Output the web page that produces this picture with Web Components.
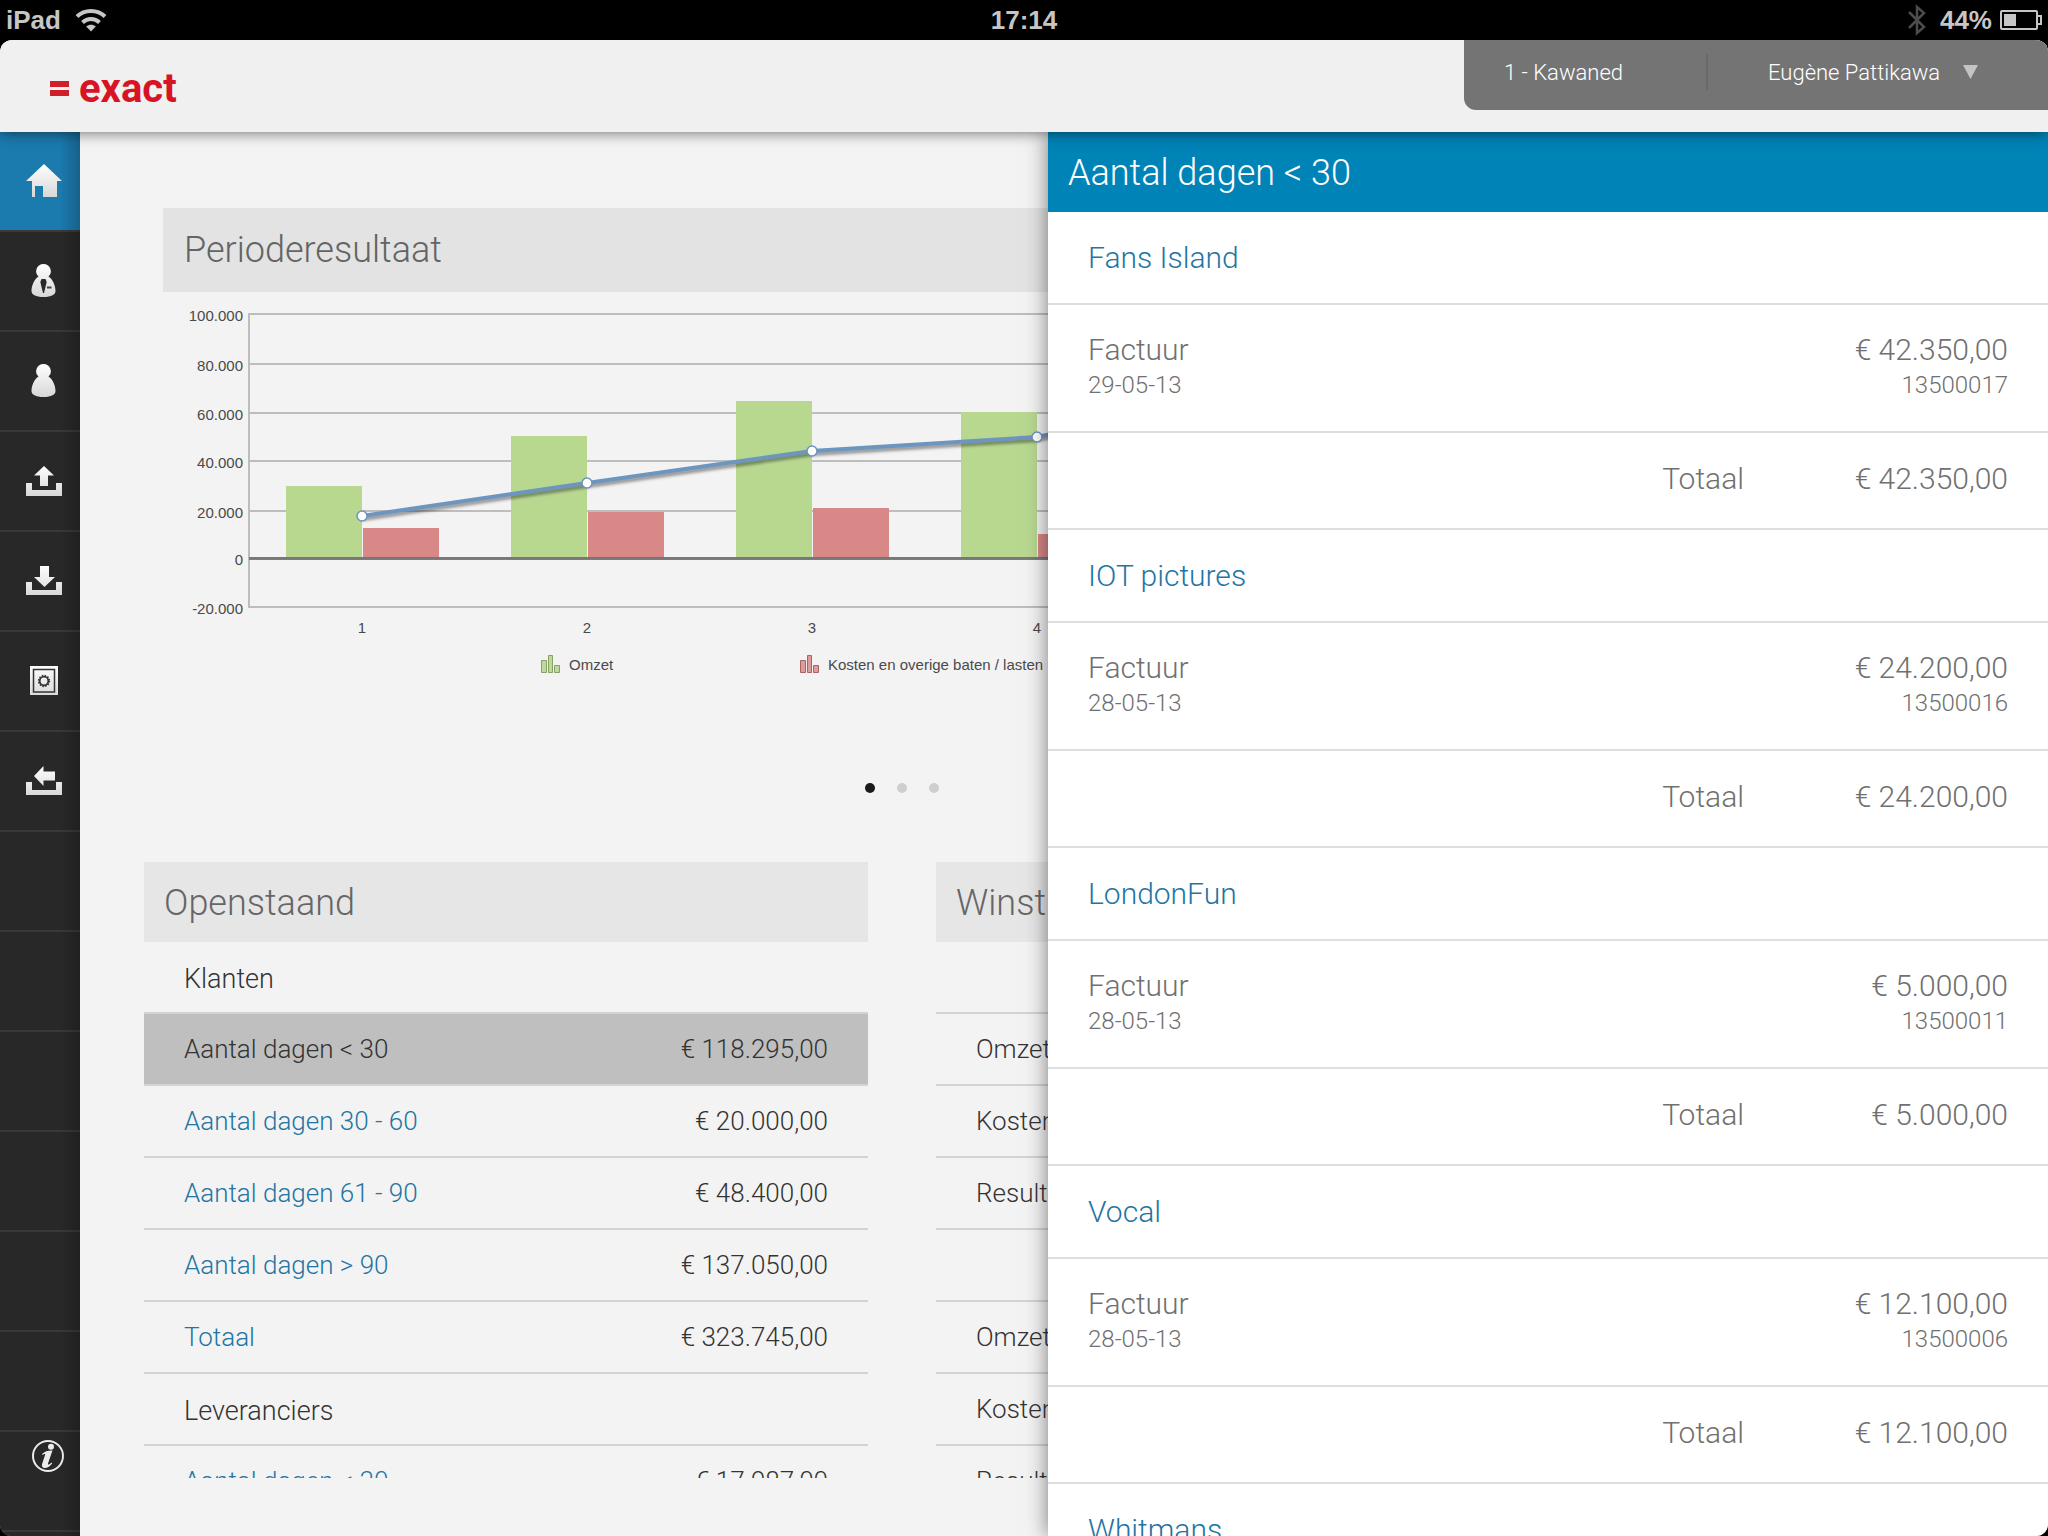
<!DOCTYPE html>
<html lang="nl">
<head>
<meta charset="utf-8">
<title>Exact - Cockpit</title>
<style>
  html, body { margin: 0; height: 100%; background: #000; }
  body { font-family: Roboto, "Liberation Sans", sans-serif; font-weight: 300; overflow: hidden; }
</style>
</head>
<body>
<exact-app>
  <status-bar slot="status" device="iPad" time="17:14" battery="44%"></status-bar>
  <app-header slot="header" company="1 - Kawaned" user="Eugène Pattikawa"></app-header>
  <side-nav slot="nav"></side-nav>
  <result-chart heading="Perioderesultaat"></result-chart>
  <page-dots count="3"></page-dots>
  <summary-row>
    <summary-table heading="Openstaand" rows="openstaand"></summary-table>
    <summary-table heading="Winst" rows="winst"></summary-table>
  </summary-row>
  <detail-drawer slot="drawer" heading="Aantal dagen &lt; 30">
    <invoice-group name="Fans Island" date="29-05-13" number="13500017" amount="€ 42.350,00"></invoice-group>
    <invoice-group name="IOT pictures" date="28-05-13" number="13500016" amount="€ 24.200,00"></invoice-group>
    <invoice-group name="LondonFun" date="28-05-13" number="13500011" amount="€ 5.000,00"></invoice-group>
    <invoice-group name="Vocal" date="28-05-13" number="13500006" amount="€ 12.100,00"></invoice-group>
    <invoice-group name="Whitmans"></invoice-group>
  </detail-drawer>
</exact-app>

<script>
const esc = s => (s || '').replace(/&/g, '&amp;').replace(/</g, '&lt;').replace(/>/g, '&gt;');

function define(name, render) {
  customElements.define(name, class extends HTMLElement {
    constructor() { super(); this.attachShadow({ mode: 'open' }); }
    connectedCallback() { this.shadowRoot.innerHTML = render(this); }
  });
}

/* Application frame: status bar, header, navigation, content and overlay drawer */
define('exact-app', () => `
  <style>
    :host { display: flex; flex-direction: column; height: 100vh; }
    .frame { flex: 1; min-height: 0; display: flex; flex-direction: column; overflow: hidden;
      border-radius: 12px; background: #f3f3f3; }
    .body { flex: 1; min-height: 0; display: flex; position: relative; }
    main { flex: 1; min-width: 0; display: flex; flex-direction: column; box-sizing: border-box;
      padding: 76px 388px 58px 64px; overflow: hidden; }
  </style>
  <slot name="status"></slot>
  <div class="frame">
    <slot name="header"></slot>
    <div class="body">
      <slot name="nav"></slot>
      <main><slot></slot></main>
      <slot name="drawer"></slot>
    </div>
  </div>`);

define('status-bar', el => `
  <style>
    :host { display: grid; grid-template-columns: 1fr auto 1fr; align-items: center; height: 40px;
      padding: 0 6px; background: #000; color: #c6c6c6; font: bold 26px/40px "Liberation Sans", sans-serif; }
    .side { display: flex; align-items: center; gap: 14px; }
    .end { justify-content: flex-end; gap: 8px; }
    .end span { margin-left: 6px; }
    svg { display: block; }
  </style>
  <div class="side"><span>${esc(el.getAttribute('device'))}</span>
    <svg width="32" height="24" viewBox="0 0 32 24" fill="none" stroke="#c6c6c6" stroke-width="4">
      <path d="M2 8.500C9.500 1 22.500 1 30 8.500"/><path d="M7.500 14.500c5-4.800 12-4.800 17 0"/>
      <path d="M16 23.500l-4.800-5c2.600-2.200 7-2.200 9.600 0z" fill="#c6c6c6" stroke="none"/></svg>
  </div>
  <span>${esc(el.getAttribute('time'))}</span>
  <div class="side end">
    <svg width="18" height="32" viewBox="0 0 18 32" fill="none" stroke="#4c4c4c" stroke-width="2.500">
      <path d="M1 8l15 15-7 6V3l7 6L1 24"/></svg>
    <span>${esc(el.getAttribute('battery'))}</span>
    <svg width="42" height="20" viewBox="0 0 42 20"><rect x="1" y="1" width="36" height="18" rx="1" fill="none" stroke="#c6c6c6" stroke-width="2"/>
      <rect x="4" y="4" width="12" height="12" fill="#c6c6c6"/><path d="M37 6h4v8h-4" fill="none" stroke="#c6c6c6" stroke-width="2"/></svg>
  </div>`);

define('app-header', el => `
  <style>
    :host { display: flex; justify-content: space-between; align-items: flex-start; height: 92px;
      position: relative; z-index: 3; background: #f0f0f0; box-shadow: 0 0 14px rgba(0,0,0,.6); }
    .logo { display: flex; align-items: center; gap: 10px; box-sizing: border-box; height: 92px; padding: 6px 0 0 50px;
      color: #d81324; font-weight: 700; font-size: 40px; line-height: 40px; text-decoration: none; }
    .account { display: flex; align-items: center; box-sizing: border-box; width: 584px; height: 70px;
      padding: 0 70px 6px 40px; background: #747474; border-bottom-left-radius: 12px; }
    button { display: flex; align-items: center; justify-content: space-between; border: 0; padding: 0;
      background: none; color: #fff; font: inherit; font-size: 22px; }
    .company { width: 202px; }
    .user { flex: 1; padding-left: 60px; }
    i { width: 2px; height: 36px; background: #6a6a6a; }
  </style>
  <a class="logo" href="#"><svg width="19" height="16"><path d="M0 0h19v6H0zM0 9h19v6H0z" fill="#cf1f2b"/></svg>exact</a>
  <div class="account">
    <button class="company">${esc(el.getAttribute('company'))}</button><i></i>
    <button class="user">${esc(el.getAttribute('user'))}
      <svg width="15" height="14"><path d="M0 0h15L7.500 14z" fill="#c4c4c4"/></svg></button>
  </div>`);

const body = 'M12 0a7.300 7.300 0 0 1 5 12.600C21.500 15.500 24 22 24 27c0 3.500-4 6-12 6S0 30.500 0 27c0-5 2.500-11.500 7-14.400A7.300 7.300 0 0 1 12 0z';
const icons = {
  Home: '<path d="M18 0l18 17h-5v16H17V22H9v11H6V17H0z"/>',
  Relaties: `<g transform="translate(5.500 0)"><path d="${body}"/><path d="M10 15h4l1.200 3-2.700 11h-1L8.800 18z" fill="#282828"/><path d="M15.500 22.500h4.500v2h-4.500z" fill="#444"/></g>`,
  Contacten: `<g transform="translate(5.500 0)"><path d="${body}"/></g>`,
  Verkoop: '<path d="M18 2l10 9.500h-6V22h-8V11.500H8zM0 19h6v7h24v-7h6v13H0z"/>',
  Inkoop: '<path d="M14 2h9v11h6L18.500 23 8 13h6zM0 18h6v8h24v-8h6v13H0z"/>',
  Kluis: '<path d="M4 2h28v29H4z"/><path d="M7.500 5.500h21v22.500h-21z" fill="none" stroke="#333" stroke-width="1.500"/><circle cx="18" cy="17" r="4.300" fill="none" stroke="#333" stroke-width="1.800"/><circle cx="18" cy="17" r="5.400" fill="none" stroke="#333" stroke-width="1.600" stroke-dasharray="1.400 1.430"/>',
  Terug: '<path d="M8 12L17.500 2v5.500H29v9H17.500V22zM0 18h6v8h24v-8h6v13H0z"/>'
};

define('nav-item', el => {
  const name = el.getAttribute('icon');
  const info = name === 'Info';
  return `
  <style>
    :host { display: block; box-sizing: border-box; height: 100px; border-bottom: 2px solid #393939; background: #282828; flex: none; }
    :host([active]) { background: #1b7aae; }
    a { display: flex; justify-content: center; box-sizing: border-box; height: 98px; padding: 32px 0 0 8px; }
    :host([icon="Info"]) a { padding: 8px 0 0 16px; }
    svg { display: block; }
  </style>
  ${!name ? '' : `<a href="#" aria-label="${name}">${info ? `
    <svg width="32" height="32" viewBox="0 0 32 32"><circle cx="16" cy="16" r="15" fill="none" stroke="#ebebeb" stroke-width="2"/>
      <circle cx="19" cy="6.800" r="3" fill="#ebebeb"/>
      <path d="M10 14c3-2.800 6-3.700 10.500-3.500l-4.500 13c-.5 1.500.8 1.800 3.300-1l1 .7C17 28 13.500 28.500 11.500 27.800c-2-.7-1.800-2.500-1.200-4.500l3-9c-1-.5-2 .1-2.800.8z" fill="#ebebeb"/></svg>` : `
    <svg width="36" height="34" viewBox="0 0 36 34" fill="url(#g)"><defs><linearGradient id="g" x1="0" y1="0" x2="0" y2="34" gradientUnits="userSpaceOnUse">
      <stop stop-color="#fff"/><stop offset="1" stop-color="#d6d6d6"/></linearGradient></defs>${icons[name]}</svg>`}</a>`}`;
});

define('side-nav', () => `
  <style>
    :host { display: block; width: 80px; flex: none; background: #282828; overflow: hidden; position: relative; }
    nav { display: flex; flex-direction: column; }
    .shade { position: absolute; inset: 0; pointer-events: none; background: linear-gradient(to left, rgba(0,0,0,.2), transparent 20px); }
  </style>
  <nav>
    <nav-item icon="Home" active></nav-item>
    ${Object.keys(icons).slice(1).map(n => `<nav-item icon="${n}"></nav-item>`).join('')}
    ${'<nav-item></nav-item>'.repeat(6)}
    <nav-item icon="Info"></nav-item>
    <nav-item></nav-item>
  </nav>
  <div class="shade"></div>`);

define('result-chart', el => {
  const grid = [[22, '100.000'], [72, '80.000'], [121, '60.000'], [169, '40.000'], [219, '20.000'], [266, '0'], [315, '-20.000']];
  const months = [[194, 236, 224], [144, 220, 191], [109, 216, 159], [120, 242, 145], [96, 230, 98], [110, 225, 90]];
  const cx = i => 199 + 225 * i;
  const legend = (x, fill, stroke, text) => `
    <g transform="translate(${x} 363)" fill="${fill}" stroke="${stroke}"><path d="M.5 5.500h5v12h-5z"/><path d="M7.500.5h4v17h-4z"/><path d="M13.500 10.500h5v7h-5z"/></g>
    <text x="${x + 28}" y="378">${text}</text>`;
  return `
  <style>
    :host { display: block; margin: 0 19px; }
    h2 { margin: 0; padding-left: 21px; background: #e3e3e3; color: #646464; font-weight: 300; font-size: 36px; line-height: 84px; }
    svg { display: block; width: 100%; height: 420px; overflow: visible; }
    text { font: 15px "Liberation Sans", sans-serif; fill: #4a4a4a; }
  </style>
  <h2>${esc(el.getAttribute('heading'))}</h2>
  <svg>
    <defs><filter id="soft" x="-5%" y="-20%" width="110%" height="150%"><feGaussianBlur stdDeviation="1.500"/></filter></defs>
    <g stroke="#bdbdbd" stroke-width="2">${grid.map(g => `<path d="M86 ${g[0]}H1436"/>`).join('')}<path d="M86 21V316"/></g>
    ${months.map((m, i) => `<rect x="${cx(i) - 76}" y="${m[0]}" width="76" height="${266 - m[0]}" fill="#b8d890"/>
      <rect x="${cx(i) + 1}" y="${m[1]}" width="76" height="${266 - m[1]}" fill="#d98888"/>`).join('')}
    <path d="M86 266.500H1436" stroke="#707070" stroke-opacity=".9" stroke-width="3"/>
    <g fill="none">
      <path d="M${months.map((m, i) => `${cx(i)} ${m[2] + 3}`).join('L')}" stroke="#000" stroke-opacity=".4" stroke-width="4" filter="url(#soft)"/>
      <path d="M${months.map((m, i) => `${cx(i)} ${m[2]}`).join('L')}" stroke="#6c95bf" stroke-width="4"/>
    </g>
    ${months.map((m, i) => `<circle cx="${cx(i)}" cy="${m[2]}" r="5" fill="#fff" stroke="#6c95bf" stroke-width="1.500"/>`).join('')}
    <g text-anchor="end">${grid.map(g => `<text x="80" y="${g[0] + 7}">${g[1]}</text>`).join('')}</g>
    <g text-anchor="middle">${months.map((m, i) => `<text x="${cx(i)}" y="341">${i + 1}</text>`).join('')}</g>
    ${legend(378, '#bfd99d', '#86a066', 'Omzet')}
    ${legend(637, '#dc9c9c', '#a86464', 'Kosten en overige baten / lasten')}
  </svg>`;
});

define('page-dots', el => `
  <style>
    :host { display: flex; justify-content: center; gap: 22px; padding: 71px 0 69px; }
    button { width: 10px; height: 10px; padding: 0; border: 0; border-radius: 50%; background: #cfcfcf; }
    button:first-of-type { background: #1a1a1a; }
  </style>
  ${Array.from({ length: +el.getAttribute('count') }, (_, i) => `<button aria-label="Pagina ${i + 1}"></button>`).join('')}`);

define('summary-row', () => `
  <style>:host { display: flex; gap: 68px; flex: 1; min-height: 0; overflow: hidden; } ::slotted(*) { flex: 1; }</style>
  <slot></slot>`);

const data = {
  openstaand: [
    ['Klanten'], ['Aantal dagen < 30', '€ 118.295,00', 'selected'], ['Aantal dagen 30 - 60', '€ 20.000,00'],
    ['Aantal dagen 61 - 90', '€ 48.400,00'], ['Aantal dagen > 90', '€ 137.050,00'], ['Totaal', '€ 323.745,00'],
    ['Leveranciers'], ['Aantal dagen < 30', '€ 17.987,00']],
  winst: [[''], ['Omzet'], ['Kosten'], ['Resultaat'], [''], ['Omzet'], ['Kosten'], ['Resultaat']]
};

define('summary-table', el => {
  const key = el.getAttribute('rows');
  return `
  <style>
    :host { display: block; min-width: 0; }
    h2 { margin: 0; padding: 2px 0 0 20px; background: #e6e6e6; color: #666; font-weight: 300; font-size: 36px; line-height: 78px; }
    table { width: 100%; border-collapse: separate; border-spacing: 0; color: #333; font-size: 26px; line-height: 30px; }
    th, td { box-sizing: border-box; height: 72px; padding: 0 40px; border-bottom: 2px solid #d3d3d3; text-align: left; font-weight: 300; }
    td { text-align: right; padding-left: 0; }
    .group { padding-top: 4px; font-size: 27px; }
    a { color: #1f75a3; text-decoration: none; }
    .selected { background: #bfbfbf; }
    .selected a { color: #333; }
  </style>
  <h2>${esc(el.getAttribute('heading'))}</h2>
  <table>${data[key].map(([label, amount, cls]) => amount
    ? `<tr class="${cls || ''}"><th scope="row"><a href="#">${esc(label)}</a></th><td>${amount}</td></tr>`
    : `<tr><th scope="row" colspan="2"${key === 'openstaand' ? ' class="group"' : ''}>${label}</th></tr>`).join('')}</table>`;
});

/* The drawer slides over the content from the right */
define('detail-drawer', el => `
  <style>
    :host { display: flex; flex-direction: column; position: absolute; top: 0; right: 0; bottom: 0; z-index: 2; width: min(1000px, 100%);
      background: #fff; box-shadow: 0 0 20px rgba(0,0,0,.5); }
    h2 { margin: 0; padding: 2px 0 0 20px; background: #0083b7; color: #fff; font-weight: 300; font-size: 36px; line-height: 78px; }
    .list { flex: 1; min-height: 0; overflow: hidden; }
  </style>
  <h2>${esc(el.getAttribute('heading'))}</h2>
  <div class="list"><slot></slot></div>`);

define('invoice-group', el => {
  const a = n => esc(el.getAttribute(n));
  return `
  <style>
    :host { display: block; color: #707070; font-size: 30px; line-height: 36px; }
    .row { display: flex; justify-content: space-between; box-sizing: border-box; padding: 0 40px; border-bottom: 2px solid #dedede; }
    .name { height: 93px; align-items: center; }
    .invoice { height: 128px; padding-top: 27px; }
    .total { height: 97px; align-items: center; justify-content: flex-end; padding-bottom: 4px; }
    .total span { width: 264px; text-align: right; }
    .end { text-align: right; }
    small { display: block; font-size: 24px; line-height: 34px; }
    a { color: #1f75a3; text-decoration: none; }
  </style>
  <div class="row name"><a href="#">${a('name')}</a></div>
  ${el.hasAttribute('amount') ? `
  <div class="row invoice"><div>Factuur<small>${a('date')}</small></div><div class="end">${a('amount')}<small>${a('number')}</small></div></div>
  <div class="row total">Totaal<span>${a('amount')}</span></div>` : ''}`;
});
</script>
</body>
</html>
